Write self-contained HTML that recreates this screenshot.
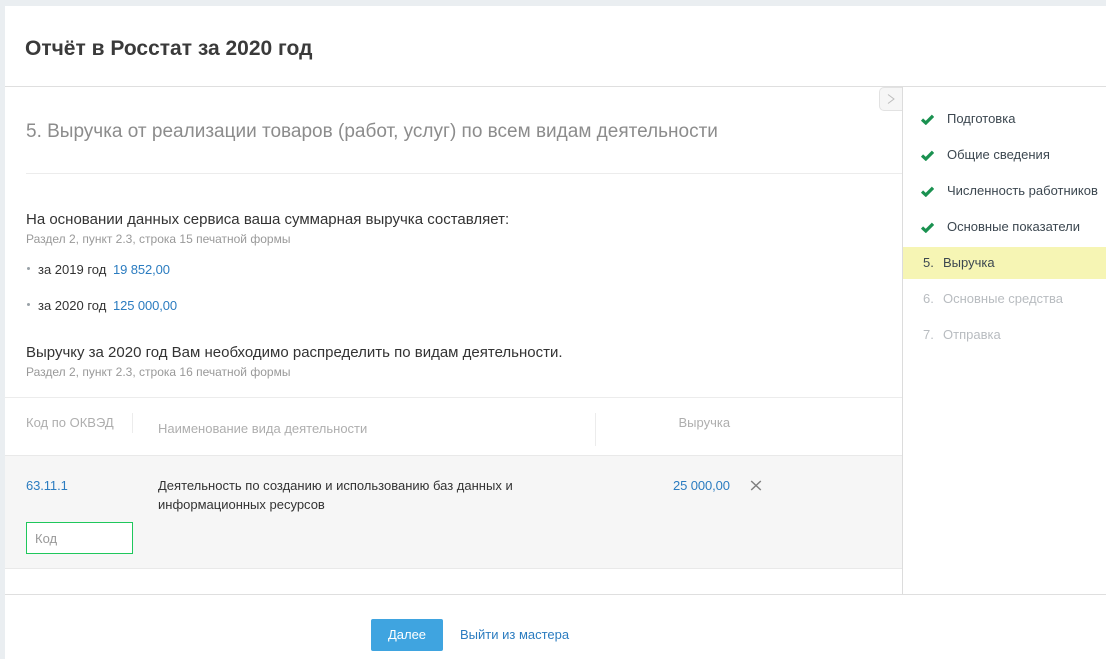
<!DOCTYPE html>
<html lang="ru"><head><meta charset="utf-8"><title>Отчёт в Росстат за 2020 год</title>
<style>
html,body{margin:0;padding:0}
body{width:1106px;height:659px;overflow:hidden;background:#eaeef1;position:relative;font-family:"Liberation Sans",Arial,sans-serif;color:#333}
.a{position:absolute;white-space:nowrap;line-height:18px}
.l{position:absolute;background:#e4e4e4}
.g{color:#999}.h{color:#aeaeae}.b{color:#2b7cc0}
.m{font-size:13px;color:#3c4750}
</style></head><body>
<div class="a" style="left:5px;top:6px;width:1101px;height:653px;background:#fff"></div>
<div class="l" style="left:5px;top:86px;width:1101px;height:1px;background:#dfdfdf"></div>
<div class="a" style="left:25px;top:37px;font-size:21px;line-height:24px;font-weight:bold;color:#3a3a3a">Отчёт в Росстат за 2020 год</div>

<div class="a" style="left:26px;top:121px;font-size:19px;line-height:22px;color:#8c8c8c">5. Выручка от реализации товаров (работ, услуг) по всем видам деятельности</div>
<div class="l" style="left:26px;top:173px;width:876px;height:1px;background:#ececec"></div>

<div class="a" style="left:26px;top:211px;font-size:15px;color:#333">На основании данных сервиса ваша суммарная выручка составляет:</div>
<div class="a g" style="left:26px;top:230px;font-size:12px">Раздел 2, пункт 2.3, строка 15 печатной формы</div>
<div class="a" style="left:27px;top:267px;width:3px;height:3px;border-radius:50%;background:#9aa2a8"></div>
<div class="a" style="left:38px;top:261px;font-size:13px;color:#333">за 2019 год</div>
<div class="a b" style="left:113px;top:261px;font-size:13px;letter-spacing:-.1px">19 852,00</div>
<div class="a" style="left:27px;top:303px;width:3px;height:3px;border-radius:50%;background:#9aa2a8"></div>
<div class="a" style="left:38px;top:297px;font-size:13px;color:#333">за 2020 год</div>
<div class="a b" style="left:113px;top:297px;font-size:13px;letter-spacing:-.1px">125 000,00</div>
<div class="a" style="left:26px;top:344px;font-size:15px;color:#333">Выручку за 2020 год Вам необходимо распределить по видам деятельности.</div>
<div class="a g" style="left:26px;top:363px;font-size:12px">Раздел 2, пункт 2.3, строка 16 печатной формы</div>

<div class="l" style="left:5px;top:397px;width:897px;height:1px;background:#ececec"></div>
<div class="a h" style="left:26px;top:414px;font-size:13px">Код по ОКВЭД</div>
<div class="l" style="left:132px;top:413px;width:1px;height:20px;background:#ececec"></div>
<div class="a h" style="left:158px;top:420px;font-size:13px">Наименование вида деятельности</div>
<div class="l" style="left:595px;top:413px;width:1px;height:33px;background:#ececec"></div>
<div class="a h" style="left:678.5px;top:414px;font-size:13px">Выручка</div>

<div class="a" style="left:5px;top:455px;width:897px;height:112px;background:#f6f6f6;border-top:1px solid #e9e9e9;border-bottom:1px solid #e9e9e9"></div>
<div class="a b" style="left:26px;top:477px;font-size:13px;letter-spacing:-.1px">63.11.1</div>
<div class="a" style="left:158px;top:476px;font-size:13px;line-height:19px;color:#333">Деятельность по созданию и использованию баз данных и<br>информационных ресурсов</div>
<div class="a b" style="left:673px;top:477px;font-size:13px;letter-spacing:-.1px">25 000,00</div>
<svg class="a" style="left:750px;top:480px" width="12" height="11" viewBox="0 0 12 11"><path d="M1.2 1L10.8 10M10.8 1L1.2 10" stroke="#7f7f7f" stroke-width="1.5" fill="none"/></svg>
<div class="a" style="left:26px;top:522px;width:105px;height:30px;border:1px solid #1fc75c;background:#fff"></div>
<div class="a" style="left:35px;top:530px;font-size:13px;color:#999">Код</div>

<div class="a" style="left:879px;top:87px;width:24px;height:24px;background:#f6f6f6;border:1px solid #e2e2e2;border-right:0;border-radius:5px 0 0 5px;box-sizing:border-box"></div>
<div class="l" style="left:902px;top:87px;width:1px;height:507px;background:#dcdcdc"></div>
<svg class="a" style="left:886px;top:93px" width="10" height="12" viewBox="0 0 10 12"><path d="M2 1.5L8 6L2 10.5" stroke="#bdbdbd" stroke-width="1" fill="none"/></svg>

<svg class="a" style="left:921px;top:114px" width="13" height="11" viewBox="0 0 13 11"><path d="M1 5.5L4.8 9L12 1.8" stroke="#1a9150" stroke-width="3.2" fill="none"/></svg>
<div class="a m" style="left:947px;top:110px">Подготовка</div>
<svg class="a" style="left:921px;top:150px" width="13" height="11" viewBox="0 0 13 11"><path d="M1 5.5L4.8 9L12 1.8" stroke="#1a9150" stroke-width="3.2" fill="none"/></svg>
<div class="a m" style="left:947px;top:146px">Общие сведения</div>
<svg class="a" style="left:921px;top:186px" width="13" height="11" viewBox="0 0 13 11"><path d="M1 5.5L4.8 9L12 1.8" stroke="#1a9150" stroke-width="3.2" fill="none"/></svg>
<div class="a m" style="left:947px;top:182px">Численность работников</div>
<svg class="a" style="left:921px;top:222px" width="13" height="11" viewBox="0 0 13 11"><path d="M1 5.5L4.8 9L12 1.8" stroke="#1a9150" stroke-width="3.2" fill="none"/></svg>
<div class="a m" style="left:947px;top:218px">Основные показатели</div>

<div class="a" style="left:903px;top:247px;width:203px;height:32px;background:#f6f5b4"></div>
<div class="a m" style="left:923px;top:254px">5.</div>
<div class="a m" style="left:943px;top:254px">Выручка</div>
<div class="a" style="left:923px;top:290px;font-size:13px;color:#b8bcc0">6.</div>
<div class="a" style="left:943px;top:290px;font-size:13px;color:#b8bcc0">Основные средства</div>
<div class="a" style="left:923px;top:326px;font-size:13px;color:#b8bcc0">7.</div>
<div class="a" style="left:943px;top:326px;font-size:13px;color:#b8bcc0">Отправка</div>

<div class="l" style="left:5px;top:594px;width:1101px;height:1px;background:#dfdfdf"></div>
<div class="a" style="left:371px;top:619px;width:72px;height:32px;background:#3fa4e0;border-radius:2px;color:#fff;font-size:13px;line-height:31px;text-align:center">Далее</div>
<div class="a" style="left:460px;top:626px;font-size:13px;color:#2b7cc0">Выйти из мастера</div>
</body></html>
